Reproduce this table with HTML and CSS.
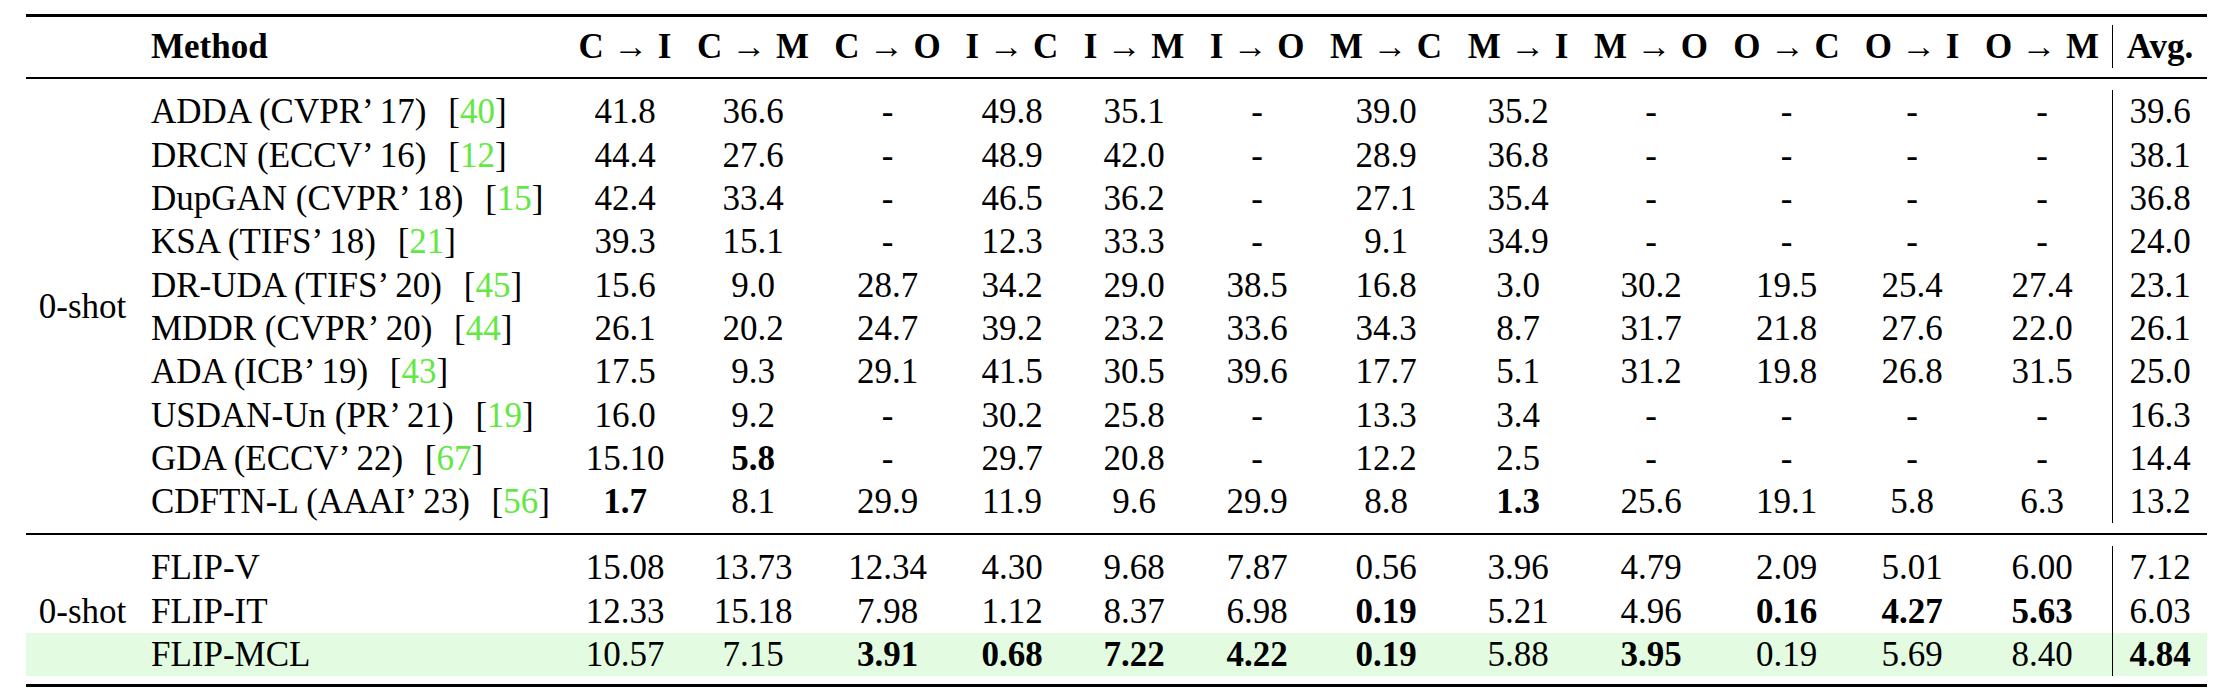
FILE: index.html
```html
<!DOCTYPE html>
<html lang="en">
<head>
<meta charset="utf-8">
<title>Cross-domain face anti-spoofing results</title>
<link rel="stylesheet" href="styles.css">
</head>
<body>
<div class="page">
<table class="results">
  <colgroup>
    <col class="c-grp">
    <col class="c-method">
    <col class="c-ci">
    <col class="c-cm">
    <col class="c-co">
    <col class="c-ic">
    <col class="c-im">
    <col class="c-io">
    <col class="c-mc">
    <col class="c-mi">
    <col class="c-mo">
    <col class="c-oc">
    <col class="c-oi">
    <col class="c-om">
    <col class="c-avg">
  </colgroup>
  <tr class="toprule"><td colspan="15"></td></tr>
  <tr class="head">
    <th class="grp"></th>
    <th class="method">Method</th>
    <th>C<span class="arr">→</span>I</th>
    <th>C<span class="arr">→</span>M</th>
    <th>C<span class="arr">→</span>O</th>
    <th>I<span class="arr">→</span>C</th>
    <th>I<span class="arr">→</span>M</th>
    <th>I<span class="arr">→</span>O</th>
    <th>M<span class="arr">→</span>C</th>
    <th>M<span class="arr">→</span>I</th>
    <th>M<span class="arr">→</span>O</th>
    <th>O<span class="arr">→</span>C</th>
    <th>O<span class="arr">→</span>I</th>
    <th>O<span class="arr">→</span>M</th>
    <th class="avg">Avg.</th>
  </tr>
  <tr class="gap-a"><td colspan="15"></td></tr>
  <tr class="midrule"><td colspan="15"></td></tr>

  <tr class="row">
    <td class="grp" rowspan="10">0-shot</td>
    <td class="method">ADDA (CVPR’ 17) <span class="cite">[<span class="ref">40</span>]</span></td>
    <td>41.8</td><td>36.6</td><td>-</td><td>49.8</td><td>35.1</td><td>-</td><td>39.0</td><td>35.2</td><td>-</td><td>-</td><td>-</td><td>-</td><td class="avg">39.6</td>
  </tr>
  <tr class="row">
    <td class="method">DRCN (ECCV’ 16) <span class="cite">[<span class="ref">12</span>]</span></td>
    <td>44.4</td><td>27.6</td><td>-</td><td>48.9</td><td>42.0</td><td>-</td><td>28.9</td><td>36.8</td><td>-</td><td>-</td><td>-</td><td>-</td><td class="avg">38.1</td>
  </tr>
  <tr class="row">
    <td class="method">DupGAN (CVPR’ 18) <span class="cite">[<span class="ref">15</span>]</span></td>
    <td>42.4</td><td>33.4</td><td>-</td><td>46.5</td><td>36.2</td><td>-</td><td>27.1</td><td>35.4</td><td>-</td><td>-</td><td>-</td><td>-</td><td class="avg">36.8</td>
  </tr>
  <tr class="row">
    <td class="method">KSA (TIFS’ 18) <span class="cite">[<span class="ref">21</span>]</span></td>
    <td>39.3</td><td>15.1</td><td>-</td><td>12.3</td><td>33.3</td><td>-</td><td>9.1</td><td>34.9</td><td>-</td><td>-</td><td>-</td><td>-</td><td class="avg">24.0</td>
  </tr>
  <tr class="row">
    <td class="method">DR-UDA (TIFS’ 20) <span class="cite">[<span class="ref">45</span>]</span></td>
    <td>15.6</td><td>9.0</td><td>28.7</td><td>34.2</td><td>29.0</td><td>38.5</td><td>16.8</td><td>3.0</td><td>30.2</td><td>19.5</td><td>25.4</td><td>27.4</td><td class="avg">23.1</td>
  </tr>
  <tr class="row">
    <td class="method">MDDR (CVPR’ 20) <span class="cite">[<span class="ref">44</span>]</span></td>
    <td>26.1</td><td>20.2</td><td>24.7</td><td>39.2</td><td>23.2</td><td>33.6</td><td>34.3</td><td>8.7</td><td>31.7</td><td>21.8</td><td>27.6</td><td>22.0</td><td class="avg">26.1</td>
  </tr>
  <tr class="row">
    <td class="method">ADA (ICB’ 19) <span class="cite">[<span class="ref">43</span>]</span></td>
    <td>17.5</td><td>9.3</td><td>29.1</td><td>41.5</td><td>30.5</td><td>39.6</td><td>17.7</td><td>5.1</td><td>31.2</td><td>19.8</td><td>26.8</td><td>31.5</td><td class="avg">25.0</td>
  </tr>
  <tr class="row">
    <td class="method">USDAN-Un (PR’ 21) <span class="cite">[<span class="ref">19</span>]</span></td>
    <td>16.0</td><td>9.2</td><td>-</td><td>30.2</td><td>25.8</td><td>-</td><td>13.3</td><td>3.4</td><td>-</td><td>-</td><td>-</td><td>-</td><td class="avg">16.3</td>
  </tr>
  <tr class="row">
    <td class="method">GDA (ECCV’ 22) <span class="cite">[<span class="ref">67</span>]</span></td>
    <td>15.10</td><td><b>5.8</b></td><td>-</td><td>29.7</td><td>20.8</td><td>-</td><td>12.2</td><td>2.5</td><td>-</td><td>-</td><td>-</td><td>-</td><td class="avg">14.4</td>
  </tr>
  <tr class="row">
    <td class="method">CDFTN-L (AAAI’ 23) <span class="cite">[<span class="ref">56</span>]</span></td>
    <td><b>1.7</b></td><td>8.1</td><td>29.9</td><td>11.9</td><td>9.6</td><td>29.9</td><td>8.8</td><td><b>1.3</b></td><td>25.6</td><td>19.1</td><td>5.8</td><td>6.3</td><td class="avg">13.2</td>
  </tr>

  <tr class="gap-b"><td colspan="15"></td></tr>
  <tr class="midrule"><td colspan="15"></td></tr>

  <tr class="row">
    <td class="grp"></td>
    <td class="method">FLIP-V</td>
    <td>15.08</td><td>13.73</td><td>12.34</td><td>4.30</td><td>9.68</td><td>7.87</td><td>0.56</td><td>3.96</td><td>4.79</td><td>2.09</td><td>5.01</td><td>6.00</td><td class="avg">7.12</td>
  </tr>
  <tr class="row">
    <td class="grp">0-shot</td>
    <td class="method">FLIP-IT</td>
    <td>12.33</td><td>15.18</td><td>7.98</td><td>1.12</td><td>8.37</td><td>6.98</td><td><b>0.19</b></td><td>5.21</td><td>4.96</td><td><b>0.16</b></td><td><b>4.27</b></td><td><b>5.63</b></td><td class="avg">6.03</td>
  </tr>
  <tr class="row highlight">
    <td class="grp"></td>
    <td class="method">FLIP-MCL</td>
    <td>10.57</td><td>7.15</td><td><b>3.91</b></td><td><b>0.68</b></td><td><b>7.22</b></td><td><b>4.22</b></td><td><b>0.19</b></td><td>5.88</td><td><b>3.95</b></td><td>0.19</td><td>5.69</td><td>8.40</td><td class="avg"><b>4.84</b></td>
  </tr>

  <tr class="bottomrule"><td colspan="15"></td></tr>
</table>
</div>
</body>
</html>
```

FILE: styles.css
```css
html, body {
  margin: 0;
  padding: 0;
  background: #ffffff;
}

body {
  font-family: "Liberation Serif", "Times New Roman", "DejaVu Serif", serif;
  color: #000000;
}

.page {
  padding: 14px 0 0 26px;
}

.results {
  border-collapse: separate;
  border-spacing: 0;
  table-layout: fixed;
  width: 2181px;
  font-size: 35px;
}

/* column widths (natural LaTeX column widths incl. tabcolsep) */
.c-grp    { width: 113px; }
.c-method { width: 427px; }
.c-ci     { width: 118px; }
.c-cm     { width: 138px; }
.c-co     { width: 131px; }
.c-ic     { width: 118px; }
.c-im     { width: 126px; }
.c-io     { width: 120px; }
.c-mc     { width: 138px; }
.c-mi     { width: 126px; }
.c-mo     { width: 140px; }
.c-oc     { width: 131px; }
.c-oi     { width: 120px; }
.c-om     { width: 140px; }
.c-avg    { width: 95px; }

.results th,
.results td {
  padding: 0 12px;
  white-space: nowrap;
  text-align: center;
  vertical-align: middle;
  line-height: 1;
  overflow: visible;
}

.results th {
  font-weight: bold;
}

.results .row td,
.results .head th {
  height: 43.3px;
}

.results .method {
  text-align: left;
}

.results .avg {
  border-left: 1px solid #000;
}

.arr {
  font-weight: normal;
  margin: 0 0.27em;
}

.cite {
  margin-left: 13px;
}

.ref {
  color: #63e843;
}

.results b {
  font-weight: bold;
}

/* booktabs-style rules and separations */
.results .toprule td {
  padding: 0;
  height: 8px;
  border-top: 3px solid #000;
}

.results .gap-a td {
  padding: 0;
  height: 9px;
}

.results .gap-b td {
  padding: 0;
  height: 10px;
}

.results .midrule td {
  padding: 0;
  height: 11px;
  border-top: 2px solid #000;
}

.results .bottomrule td {
  padding: 0;
  height: 8px;
  border-bottom: 3px solid #000;
}

.results .highlight td {
  background: #e3fbe0;
}
```
